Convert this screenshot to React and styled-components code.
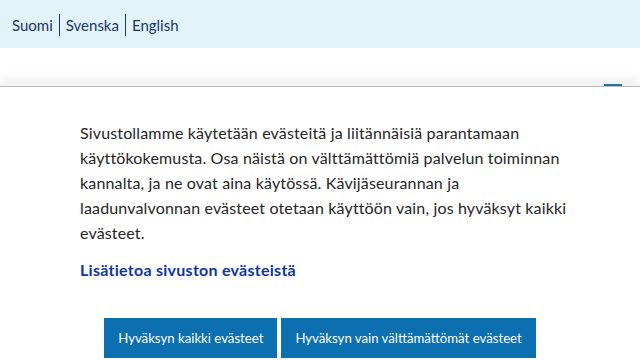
import React from "react";
import styled, { createGlobalStyle } from "styled-components";

const Global = createGlobalStyle`
  html, body { margin: 0; padding: 0; }
  body { font-family: Lato, "Open Sans", sans-serif; background: #fff; overflow: hidden; }
`;

const Page = styled.div`
  width: 640px;
  height: 360px;
  position: relative;
  overflow: hidden;
`;

const LangBar = styled.nav`
  height: 48px;
  background: #e2f3fa;
  display: flex;
  align-items: center;
  padding-left: 12px;
  padding-top: 1px;
  box-sizing: border-box;
`;

const LangLink = styled.a`
  font-size: 15px;
  color: #1c3566;
  text-decoration: none;
  padding: 0 6px;
  line-height: 22px;
  border-left: ${(p) => (p.$first ? "none" : "1px solid #1c3566")};
  &:first-child { padding-left: 0; }
`;

const Header = styled.header`
  height: 60px;
  display: flex;
  align-items: flex-start;
  justify-content: space-between;
  padding: 30px 18px 0 85px;
`;

const Logo = styled.div`
  font-size: 32px;
  line-height: 40px;
  font-weight: 700;
  color: #3b86bb;
`;

const Burger = styled.div`
  width: 18px;
  height: 3px;
  background: #2a7bb3;
  margin-top: 6px;
  box-shadow: 0 6px 0 #2a7bb3, 0 12px 0 #2a7bb3;
`;

const Banner = styled.section`
  position: absolute;
  left: 0;
  right: 0;
  top: 86px;
  bottom: 0;
  background: #fff;
  border-top: 1px solid #b9b9b9;
  box-shadow: 0 -8px 10px rgba(0, 0, 0, 0.06);
  padding: 33px 40px 0 80px;
  display: flex;
  flex-direction: column;
  align-items: flex-start;
`;

const Text = styled.p`
  margin: 0;
  font-size: 16px;
  line-height: 25px;
  letter-spacing: 0.15px;
  color: #262626;
  max-width: 490px;
`;

const MoreLink = styled.a`
  margin-top: 15px;
  font-size: 16px;
  font-weight: 700;
  letter-spacing: 0.27px;
  color: #0f35a0;
  text-decoration: none;
`;

const Buttons = styled.div`
  margin-top: 39px;
  display: flex;
  justify-content: center;
  gap: 4px;
  align-self: stretch;
  margin-left: -80px;
  margin-right: -40px;
`;

const Button = styled.button`
  height: 40px;
  padding: 0 14px;
  border: none;
  background: #0b6fb0;
  color: #fff;
  font-family: inherit;
  font-size: 13.2px;
`;

export default function App() {
  return (
    <Page>
      <Global />
      <LangBar>
        <LangLink $first href="#">Suomi</LangLink>
        <LangLink href="#">Svenska</LangLink>
        <LangLink href="#">English</LangLink>
      </LangBar>
      <Header>
        <Logo>Mäntsälä</Logo>
        <Burger />
      </Header>
      <Banner>
        <Text>
          Sivustollamme käytetään evästeitä ja liitännäisiä parantamaan
          käyttökokemusta. Osa näistä on välttämättömiä palvelun toiminnan
          kannalta, ja ne ovat aina käytössä. Kävijäseurannan ja
          laadunvalvonnan evästeet otetaan käyttöön vain, jos hyväksyt kaikki
          evästeet.
        </Text>
        <MoreLink href="#">Lisätietoa sivuston evästeistä</MoreLink>
        <Buttons>
          <Button>Hyväksyn kaikki evästeet</Button>
          <Button>Hyväksyn vain välttämättömät evästeet</Button>
        </Buttons>
      </Banner>
    </Page>
  );
}
